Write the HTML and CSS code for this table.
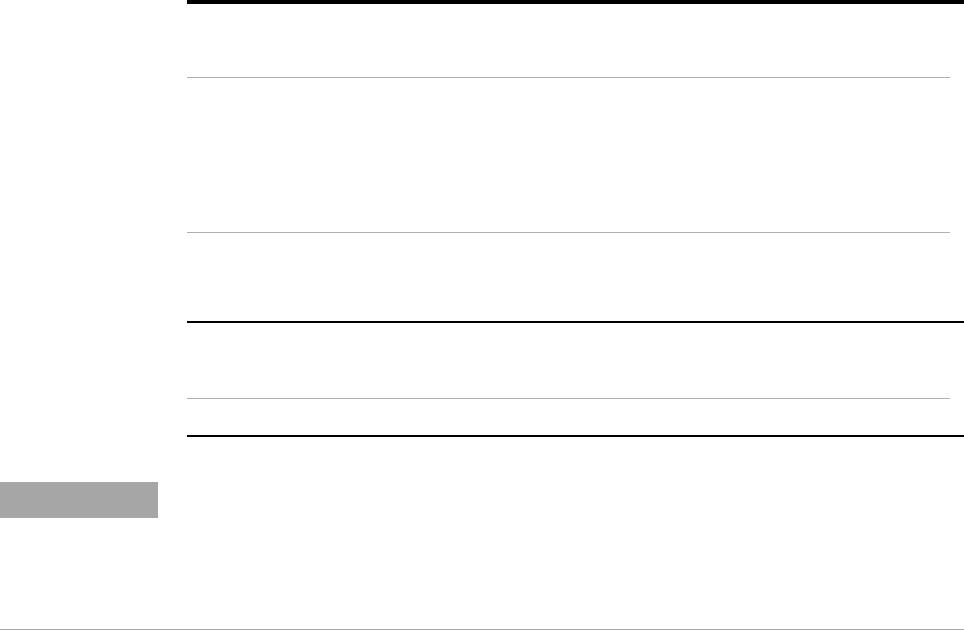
FILE: index.html
```html
<!DOCTYPE html>
<html lang="en">
<head>
<meta charset="utf-8">
<title>Page</title>
<link rel="stylesheet" href="styles.css">
</head>
<body>
<div class="page">
  <aside class="sidebar">
    <div class="side-box"></div>
  </aside>
  <main class="main">
    <div class="rule-top"></div>
    <div class="row row-a"></div>
    <div class="rule-grey"></div>
    <div class="row row-b"></div>
    <div class="rule-grey"></div>
    <div class="row row-c"></div>
    <div class="rule-black"></div>
    <div class="row row-d"></div>
    <div class="rule-grey"></div>
    <div class="row row-e"></div>
    <div class="rule-black"></div>
  </main>
</div>
</body>
</html>
```

FILE: styles.css
```css
html, body {
  margin: 0;
  padding: 0;
  background: #ffffff;
  font-family: "Liberation Sans", Arial, sans-serif;
}
.page {
  display: flex;
  height: 629px;
  border-bottom: 1px solid #ababab;
  overflow: hidden;
}
.sidebar {
  width: 158px;
  flex: none;
  padding-top: 482px;
}
.side-box {
  height: 36px;
  background: #a6a6a6;
}
.main {
  flex: 1;
  margin-left: 29px;
  display: flex;
  flex-direction: column;
}
.rule-top {
  height: 4px;
  background: #000000;
}
.rule-grey {
  height: 1px;
  background: #b0b0b0;
  margin-right: 14px;
}
.rule-black {
  height: 2px;
  background: #000000;
}
.row-a { height: 73px; }
.row-b { height: 154px; }
.row-c { height: 88px; }
.row-d { height: 75px; }
.row-e { height: 36px; }
```
